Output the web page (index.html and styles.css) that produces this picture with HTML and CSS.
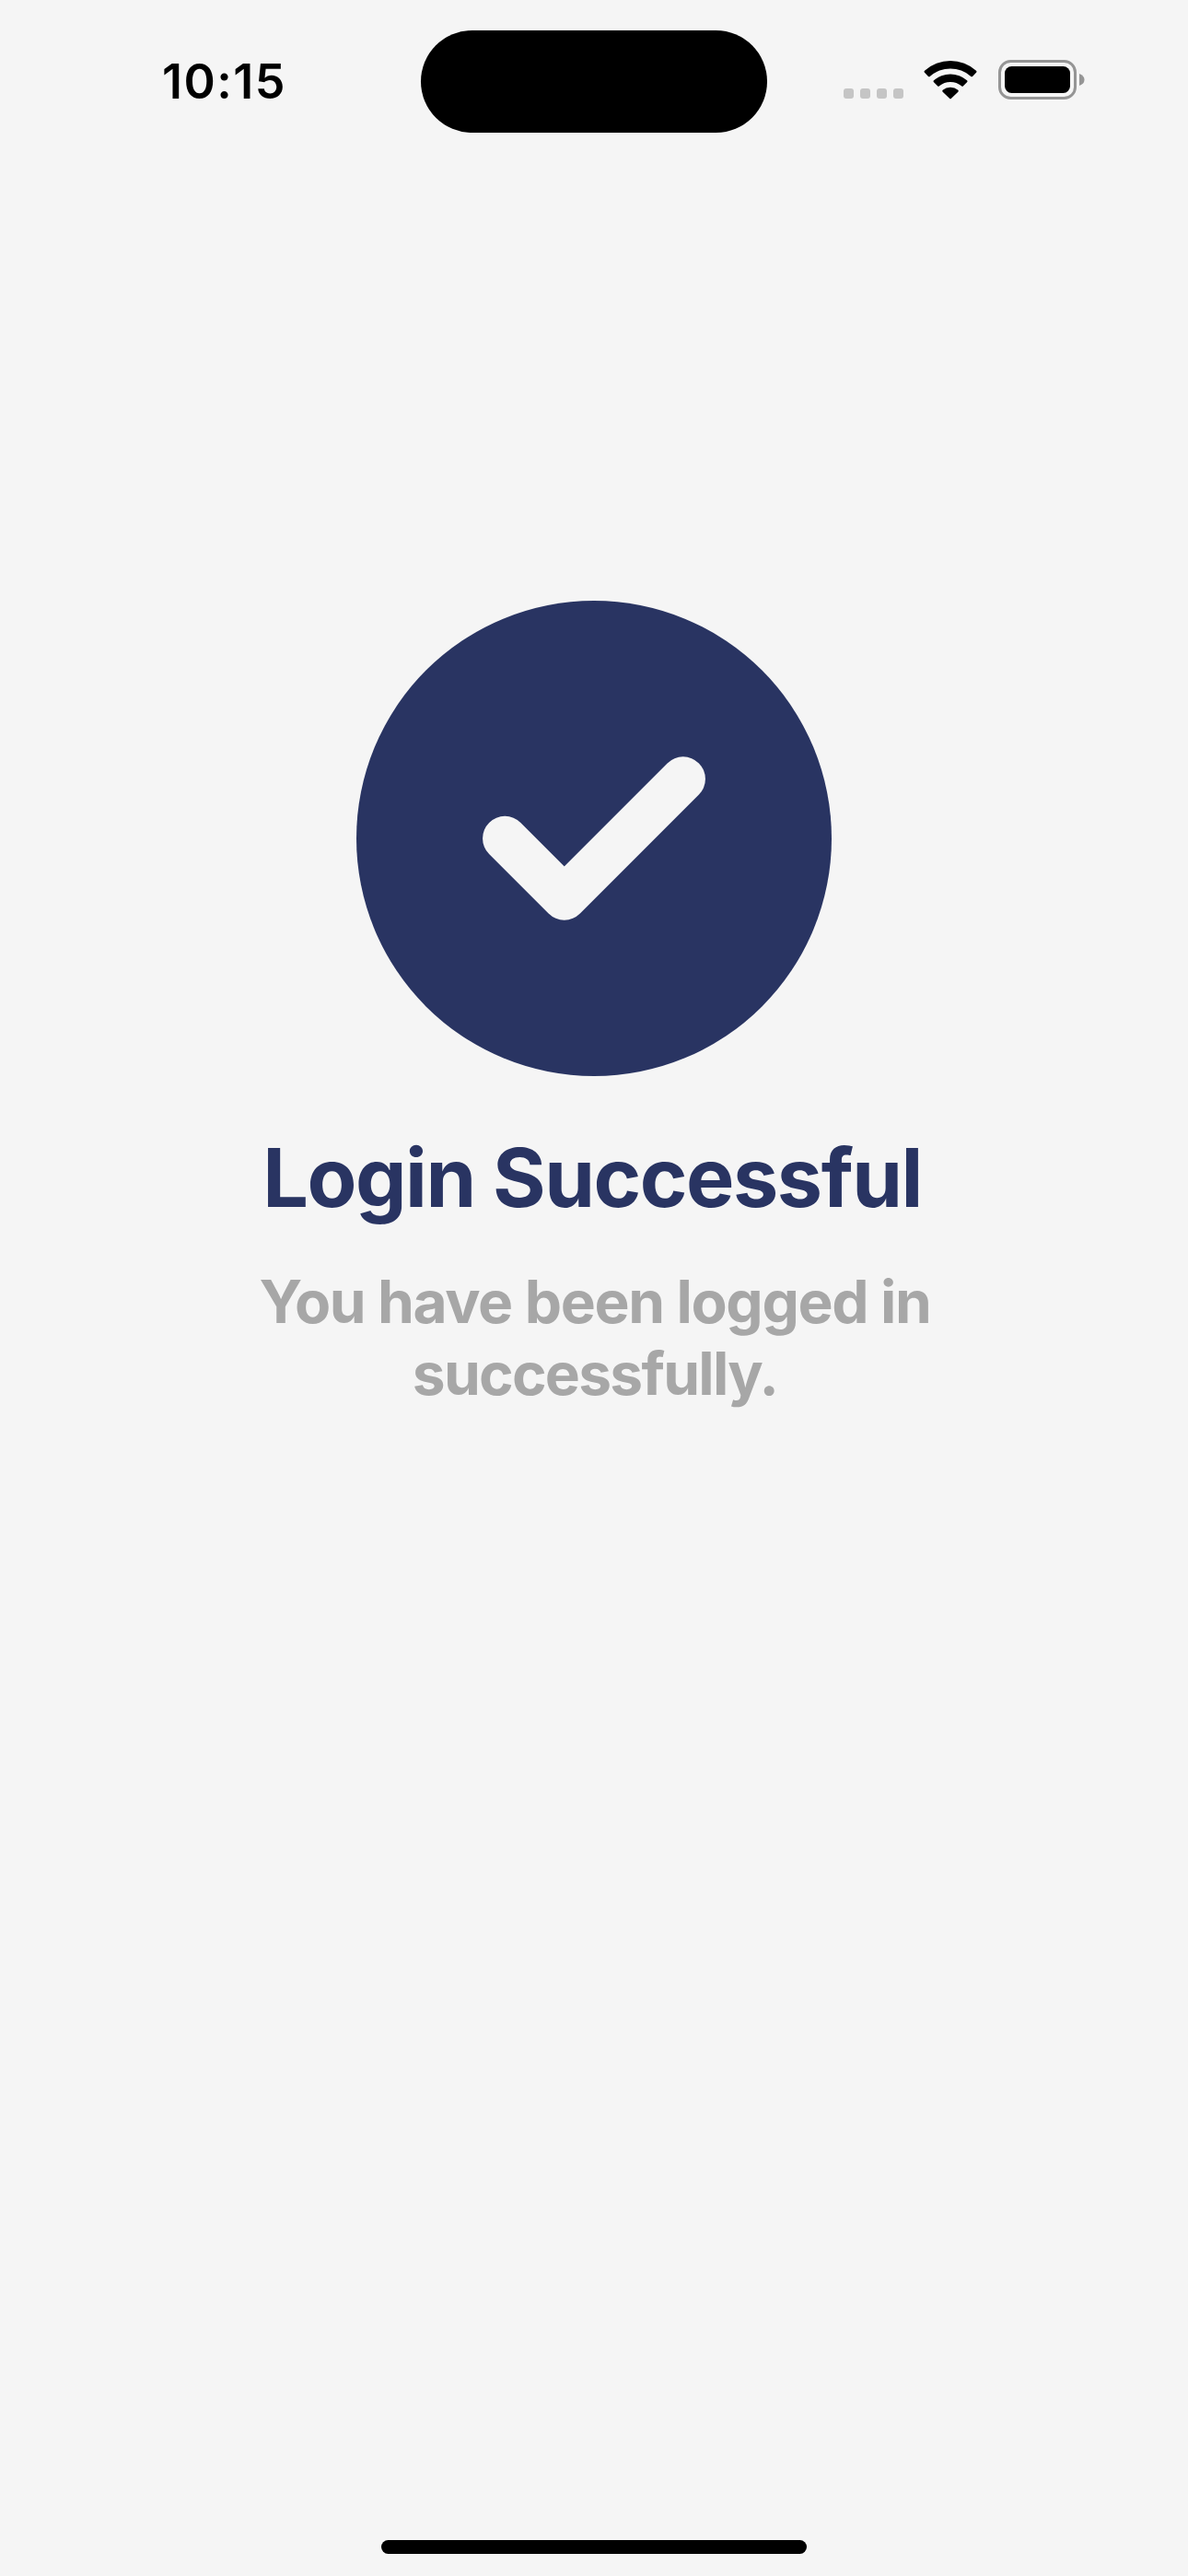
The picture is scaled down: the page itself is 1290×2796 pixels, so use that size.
FILE: index.html
```html
<!DOCTYPE html>
<html lang="en">
<head>
<meta charset="utf-8">
<title>Login Successful</title>
<link rel="stylesheet" href="styles.css">
</head>
<body>
<div class="screen">
  <header class="status-bar">
    <div class="status-left"><span class="time">10:15</span></div>
    <div class="island"></div>
    <div class="status-right">
      <div class="signal"><i class="dot"></i><i class="dot"></i><i class="dot"></i><i class="dot"></i></div>
      <svg class="wifi" viewBox="0 0 174 129" aria-hidden="true">
        <path d="M3 35Q0 38 3 41L15 54Q18 56 21 53A100 100 0 0 1 153 53Q156 56 159 54L171 41Q174 38 171 35A126 126 0 0 0 3 35Z"/>
        <path d="M33 67Q30 70 33 73L45 85Q48 88 51 85A57 57 0 0 1 123 85Q126 88 129 85L141 73Q144 70 141 67A82 82 0 0 0 33 67Z"/>
        <path d="M62 98Q59 101 62 104L84 125Q87 128 90 125L112 104Q115 101 112 98A40 40 0 0 0 62 98Z"/>
      </svg>
      <svg class="battery" viewBox="0 0 95 43" aria-hidden="true">
        <rect x="1.5" y="1.5" width="82" height="40" rx="12" class="battery-shell"/>
        <rect x="7" y="7" width="71" height="29" rx="7.5"/>
        <path class="battery-tip" d="M88 15Q93.500 17 93.500 21.500T88 28Z"/>
      </svg>
    </div>
  </header>
  <main class="message">
    <svg class="badge" viewBox="0 0 16 16" role="img" aria-label="Success">
      <circle cx="8" cy="8" r="8"/>
      <path d="M5 8L7 10L11 6"/>
    </svg>
    <h1 class="title">Login Successful</h1>
    <p class="subtitle">You have been logged in<br><span class="subtitle-end">successfully.</span></p>
  </main>
  <footer class="home"><div class="home-indicator"></div></footer>
</div>
</body>
</html>
```
FILE: styles.css
```css
* { box-sizing: border-box; }
body { margin: 0; background: #f5f5f5; font-family: Inter, "Liberation Sans", sans-serif; }
.screen { width: 1290px; height: 2796px; display: flex; flex-direction: column; overflow: hidden; }
.status-bar { height: 177px; display: grid; grid-template-columns: 457px 376px 457px; }
.status-left { padding: 58px 0 0 176px; }
.time { font-size: 52px; line-height: 62px; font-weight: 600; letter-spacing: 1.5px; color: #000; }
.island { height: 111px; margin-top: 33px; border-radius: 56px; background: #000; }
.status-right { display: flex; align-items: flex-start; padding: 65px 0 0 83px; }
.signal { display: flex; gap: 7px; padding-top: 31px; }
.dot { width: 11px; height: 11px; border-radius: 3px; background: #c5c5c5; }
.wifi { width: 58px; height: 43px; margin-left: 22px; }
.battery { width: 95px; height: 43px; margin-left: 23px; }
.battery-shell { fill: none; stroke: #959595; stroke-width: 3; }
.battery-tip { fill: #959595; }
.message { flex: 1; display: flex; flex-direction: column; align-items: center; padding-top: 475px; text-align: center; }
.badge { width: 516px; height: 516px; fill: #293462; }
.badge path { fill: none; stroke: #f5f5f5; stroke-width: 1.5; stroke-linecap: round; stroke-linejoin: round; }
.title { margin: 56px 0 0; padding-right: 4px; font-size: 88px; line-height: 108px; font-weight: 700; letter-spacing: -1.48px; color: #293462; white-space: nowrap; }
.subtitle { margin: 42px 0 0; padding-left: 2px; font-size: 64px; line-height: 78px; font-weight: 700; letter-spacing: -1.36px; color: #a7a7a7; white-space: nowrap; }
.subtitle-end { letter-spacing: -1.73px; }
.home { height: 39px; display: flex; justify-content: center; }
.home-indicator { width: 462px; height: 15px; border-radius: 8px; background: #000; }
```
